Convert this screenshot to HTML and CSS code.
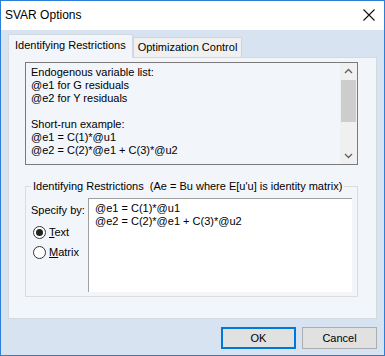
FILE: index.html
```html
<!DOCTYPE html>
<html lang="en">
<head>
<meta charset="UTF-8">
<title>SVAR Options</title>
<link rel="stylesheet" href="styles.css">
</head>
<body>
<div class="window">
  <div class="titlebar">
    <span class="title">SVAR Options</span>
    <svg class="close" width="12" height="12" viewBox="0 0 12 12"><path d="M0.5 0.5 L11.5 11.5 M11.5 0.5 L0.5 11.5" stroke="#111" stroke-width="1.1" fill="none"/></svg>
  </div>
  <div class="client">
    <div class="tabs">
      <div class="tab active">Identifying Restrictions</div>
      <div class="tab">Optimization Control</div>
    </div>
    <div class="panel">
      <div class="infobox">
        <div class="infotext">Endogenous variable list:<br>@e1 for G residuals<br>@e2 for Y residuals<br><br>Short-run example:<br>@e1 = C(1)*@u1<br>@e2 = C(2)*@e1 + C(3)*@u2</div>
        <div class="scrollbar">
          <svg width="17" height="17" viewBox="0 0 17 17"><path d="M5 10 L8.5 6.5 L12 10" stroke="#606060" stroke-width="1.3" fill="none"/></svg>
          <div class="track"><div class="thumb"></div></div>
          <svg width="17" height="17" viewBox="0 0 17 17"><path d="M5 7 L8.5 10.5 L12 7" stroke="#606060" stroke-width="1.3" fill="none"/></svg>
        </div>
      </div>
      <fieldset class="group">
        <legend>Identifying Restrictions&nbsp; (Ae = Bu where E[u'u] is identity matrix)</legend>
        <div class="specify">
          <div class="choices">
            <div class="label">Specify by:</div>
            <label class="radio"><span class="dot checked"></span><span><u>T</u>ext</span></label>
            <label class="radio"><span class="dot"></span><span><u>M</u>atrix</span></label>
          </div>
          <div class="editor">@e1 = C(1)*@u1<br>@e2 = C(2)*@e1 + C(3)*@u2</div>
        </div>
      </fieldset>
    </div>
    <div class="buttons">
      <div class="btn default">OK</div>
      <div class="btn">Cancel</div>
    </div>
  </div>
</div>
</body>
</html>
```

FILE: styles.css
```css
* {
    margin: 0;
    padding: 0;
    box-sizing: border-box;
}

body {
    font-family: "Liberation Sans", Arial, sans-serif;
    font-size: 11px;
    color: #000;
    background: #fff;
}

.window {
    width: 385px;
    height: 356px;
    border: 1px solid #2b7fd8;
    display: flex;
    flex-direction: column;
}

.titlebar {
    height: 29px;
    background: #fff;
    display: flex;
    align-items: center;
    justify-content: space-between;
    padding: 0 9px 2px 4px;
}

.title {
    font-size: 12px;
}

.client {
    flex: 1;
    background: #d7e3f1;
    padding: 4px 7px 0 7px;
    display: flex;
    flex-direction: column;
}

.tabs {
    display: flex;
    align-items: flex-end;
    height: 23px;
    position: relative;
    z-index: 1;
}

.tab {
    height: 20px;
    padding: 0 4px;
    border: 1px solid #d0d6de;
    border-bottom: none;
    background: #f0f0f0;
    line-height: 19px;
}

.tab.active {
    height: 24px;
    margin-bottom: -1px;
    padding: 0 6px;
    background: #f2f5fa;
    border-color: #d3d9e1;
    line-height: 20px;
}

.panel {
    height: 262px;
    background: #f2f5fa;
    border: 1px solid #d3d9e1;
    padding: 4px 18px 0 16px;
}

.infobox {
    height: 103px;
    border: 1px solid #7a7a7a;
    display: flex;
}

.infotext {
    flex: 1;
    padding: 3px 5px;
    line-height: 13px;
}

.scrollbar {
    width: 17px;
    display: flex;
    flex-direction: column;
    background: #f0f0f0;
}

.track {
    flex: 1;
}

.thumb {
    margin: 0 1px;
    height: 42px;
    background: #cdcdcd;
}

.group {
    margin-top: 14px;
    height: 118px;
    border: 1px solid #dcdcdc;
    border-radius: 0;
    padding: 0 5px 0 5px;
}

.group legend {
    padding: 0 2px;
    margin-left: 0;
    line-height: 14px;
    white-space: nowrap;
}

.specify {
    display: flex;
    margin-top: 5px;
}

.choices {
    width: 57px;
    padding-top: 5px;
}

.label {
    line-height: 14px;
    margin-bottom: 5px;
}

.radio {
    display: flex;
    align-items: center;
    gap: 3px;
    height: 20px;
    padding-left: 2px;
}

.dot {
    width: 13px;
    height: 13px;
    border: 1px solid #333;
    border-radius: 50%;
    background: #fff;
    position: relative;
}

.dot.checked::after {
    content: "";
    position: absolute;
    left: 2px;
    top: 2px;
    width: 7px;
    height: 7px;
    border-radius: 50%;
    background: #222;
}

.editor {
    width: 264px;
    height: 94px;
    background: #fff;
    border-top: 1px solid #a0a0a0;
    border-left: 1px solid #a0a0a0;
    padding: 3px 6px;
    line-height: 13px;
}

.buttons {
    display: flex;
    justify-content: flex-end;
    gap: 6px;
    padding: 8px 0 0 0;
}

.btn {
    width: 75px;
    height: 22px;
    border: 1px solid #adadad;
    background: #e1e1e1;
    text-align: center;
    line-height: 20px;
}

.btn.default {
    border: 2px solid #0078d7;
    line-height: 18px;
}
```
